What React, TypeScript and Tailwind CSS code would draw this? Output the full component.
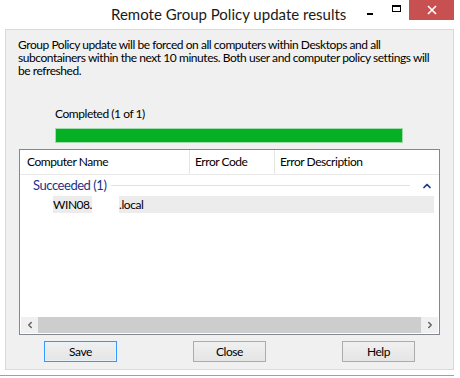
import { ChevronUp, ChevronLeft, ChevronRight } from 'lucide-react';

const font = { fontFamily: 'Lato, "Noto Sans", sans-serif' };

function WinButton({ label, primary }: { label: string; primary?: boolean }) {
  return (
    <button
      className={`w-[73px] h-[21px] text-[12px] leading-none text-black bg-gradient-to-b from-[#f0f0f0] to-[#e5e5e5] border ${
        primary ? 'border-[#3399ff] shadow-[inset_0_0_0_1px_#e5f1fb]' : 'border-[#acacac]'
      }`}
    >
      {label}
    </button>
  );
}

export default function App() {
  return (
    <div className="w-[460px] h-[378px] bg-white overflow-hidden text-[#000] tracking-[-0.45px]" style={font}>
      {/* Title bar */}
      <div className="h-[29px] flex items-start">
        <div className="w-[357px] pl-[111px] pt-[4px] text-[15px] leading-[20px] text-[#1a1a1a] whitespace-nowrap tracking-normal">
          Remote Group Policy update results
        </div>
        <div className="flex items-start">
          <div className="w-[26px] h-[20px] flex items-center justify-center">
            <div className="w-[6px] h-[2px] bg-black mt-[8px]" />
          </div>
          <div className="w-[26px] h-[20px] flex items-center justify-center">
            <div className="w-[9px] h-[7px] border border-black border-t-2 mb-[3px]" />
          </div>
          <div className="w-[45px] h-[20px] bg-[#c75050] flex items-center justify-center">
            <svg width="10" height="10" viewBox="0 0 10 10">
              <path d="M1 1 L9 9 M9 1 L1 9" stroke="white" strokeWidth="1.6" />
            </svg>
          </div>
        </div>
      </div>

      {/* Client area */}
      <div className="ml-[5px] w-[449px] h-[341px] border border-[#d9d9d9] bg-[#f0f0f0] flex flex-col">
        <p className="pl-[12px] pt-[8px] text-[12px] leading-[13px] whitespace-nowrap">
          Group Policy update will be forced on all computers within Desktops and all
          <br />
          subcontainers within the next 10 minutes. Both user and computer policy settings will
          <br />
          be refreshed.
        </p>

        <div className="pl-[49px] mt-[30px] text-[12px] leading-[13px]">Completed (1 of 1)</div>
        <div className="ml-[49px] mt-[8px] w-[348px] h-[15px] border border-[#9fdca9] bg-[#06b025]" />

        {/* List */}
        <div className="ml-[13px] mt-[6px] w-[421px] h-[186px] border border-[#828790] bg-white flex flex-col">
          <div className="flex h-[25px] border-b border-[#eaeaea] text-[12px] items-center">
            <div className="w-[170px] pl-[7px] h-full flex items-center border-r border-[#e5e5e5]">Computer Name</div>
            <div className="w-[85px] pl-[5px] h-full flex items-center border-r border-[#e5e5e5]">Error Code</div>
            <div className="flex-1 pl-[5px] h-full flex items-center">Error Description</div>
          </div>
          <div className="flex items-center h-[21px] pl-[13px] pr-[6px]">
            <span className="text-[13px] text-[#1e3287]">Succeeded (1)</span>
            <div className="flex-1 h-px bg-[#e2e2e2] mx-[5px]" />
            <ChevronUp className="w-[12px] h-[12px] text-[#1e3287] ml-[6px]" strokeWidth={3.5} />
          </div>
          <div className="flex items-center h-[17px] mx-[5px] bg-[#ececec] text-[12px]">
            <div className="w-[28px] h-full bg-white" />
            <span>WIN08.</span>
            <div className="w-[27px] h-full bg-white" />
            <span>.local</span>
          </div>
          <div className="flex-1" />
          <div className="h-[16px] mb-px mx-px flex items-center bg-[#f0f0f0]">
            <div className="w-[17px] flex justify-center">
              <ChevronLeft className="w-[10px] h-[10px] text-[#606060]" strokeWidth={3.5} />
            </div>
            <div className="flex-1 h-full bg-[#cdcdcd]" />
            <div className="w-[17px] flex justify-center">
              <ChevronRight className="w-[10px] h-[10px] text-[#606060]" strokeWidth={3.5} />
            </div>
          </div>
        </div>

        {/* Buttons */}
        <div className="flex mt-[6px] pl-[38px] gap-[76px]">
          <WinButton label="Save" primary />
          <WinButton label="Close" />
          <WinButton label="Help" />
        </div>
      </div>

      {/* background beneath window */}
      <div className="h-[5px]" />
      <div className="h-px bg-[#a0a0a0] mr-[6px]" />
    </div>
  );
}
